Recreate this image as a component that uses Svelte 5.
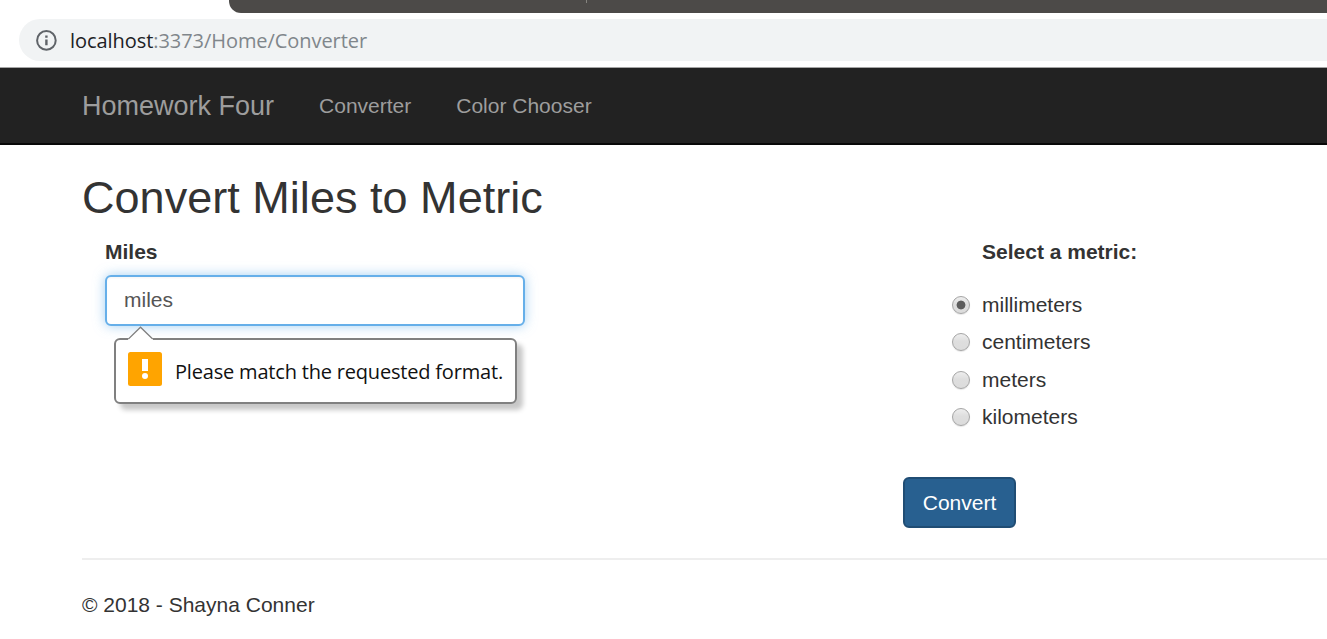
<script>
  const metrics = ['millimeters', 'centimeters', 'meters', 'kilometers'];
  let selected = $state('millimeters');
  let miles = $state('miles');
</script>

<div class="window">
  <div class="tabs"><span class="separator"></span></div>

  <div class="address">
    <svg class="info" viewBox="0 0 22 22" width="22" height="22">
      <circle cx="11.4" cy="11.4" r="9.3" fill="none" stroke="#5f6368" stroke-width="2" />
      <path d="M10.2 10.4h2.4v5.8h-2.4zM10.2 6.4h2.4v2.4h-2.4z" fill="#5f6368" />
    </svg>
    <span class="url"><span class="host">localhost</span><span class="path">:3373/Home/Converter</span></span>
  </div>

  <nav>
    <span class="brand">Homework Four</span>
    <span class="link">Converter</span>
    <span class="link">Color Chooser</span>
  </nav>

  <main>
    <h2>Convert Miles to Metric</h2>
    <div class="form">
      <div class="field">
        <label for="miles">Miles</label>
        <input id="miles" class="text" type="text" bind:value={miles} />
        <div class="popover">
          <svg class="arrow" viewBox="0 0 26 15" width="26" height="15">
            <path d="M0 13 L12.5 1 L25 13 V15 H0z" fill="#fff" />
            <path d="M0.3 13 L12.5 1.2 L24.7 13" fill="none" stroke="#808080" stroke-width="1.3" />
          </svg>
          <svg class="warn" viewBox="0 0 34 34" width="34" height="34">
            <rect width="34" height="34" rx="2.5" fill="#ffa400" />
            <rect x="14" y="7" width="6" height="12" fill="#fff" />
            <circle cx="17" cy="24" r="3" fill="#fff" />
          </svg>
          <span class="message">Please match the requested format.</span>
        </div>
      </div>

      <div class="choice">
        <div class="title">Select a metric:</div>
        <div class="radios">
          {#each metrics as metric}
            <label class="option">
              <input type="radio" name="metric" value={metric} bind:group={selected} />
              <span>{metric}</span>
            </label>
          {/each}
        </div>
        <button>Convert</button>
      </div>
    </div>
    <hr />
    <footer>© 2018 - Shayna Conner</footer>
  </main>
</div>

<style>
  :global(body) {
    margin: 0;
    background: #fff;
    overflow: hidden;
  }
  .window {
    width: 1327px;
    height: 639px;
    overflow: hidden;
    box-sizing: border-box;
    font: 21px/30px 'Liberation Sans', Arial, sans-serif;
    color: #333;
  }
  .tabs {
    height: 13px;
    margin-left: 229px;
    background: #4c4a48;
    border-bottom-left-radius: 12px;
  }
  .separator {
    display: block;
    width: 1px;
    height: 3px;
    margin-left: 357px;
    background: #85847f;
  }
  .address {
    display: flex;
    align-items: center;
    height: 42px;
    margin: 6px 0 6px 19px;
    padding-left: 16px;
    background: #f1f3f4;
    border-radius: 21px 0 0 21px;
  }
  .info {
    margin-right: 13px;
  }
  .url {
    padding-top: 2px;
    font-family: 'Open Sans', 'Noto Sans', sans-serif;
    font-size: 20px;
    letter-spacing: -0.06px;
    white-space: nowrap;
  }
  .host {
    color: #202124;
  }
  .path {
    color: #80868b;
  }
  nav {
    display: flex;
    align-items: center;
    height: 75px;
    padding-left: 82px;
    background: #222;
    border-top: 1px solid #a5a5a5;
    border-bottom: 2px solid #080808;
    color: #9d9d9d;
  }
  .brand {
    font-size: 27px;
    margin-right: 22.5px;
  }
  .link {
    padding: 0 22.5px;
  }
  main {
    padding-left: 82px;
  }
  h2 {
    margin: 28px 0 14px;
    font-size: 45px;
    font-weight: 400;
    line-height: 50px;
    letter-spacing: 0.03px;
  }
  .form {
    display: flex;
    height: 321px;
  }
  .field {
    position: relative;
    width: 420px;
    margin-left: 23px;
  }
  .field label,
  .title {
    display: block;
    font-weight: 700;
  }
  .text {
    display: block;
    box-sizing: border-box;
    width: 420px;
    height: 51px;
    margin-top: 8px;
    padding: 0 17px 2px;
    border: 2px solid #66afe9;
    border-radius: 6px;
    outline: none;
    box-shadow:
      inset 0 1.5px 1.5px rgba(0, 0, 0, 0.03),
      0 0 12px rgba(102, 175, 233, 0.6);
    font: inherit;
    color: #555;
  }
  .popover {
    position: absolute;
    top: 101px;
    left: 9px;
    display: flex;
    align-items: center;
    box-sizing: border-box;
    width: 403px;
    height: 66px;
    padding-left: 12px;
    background: #fff;
    border: 2px solid #808080;
    border-radius: 6px;
    box-shadow: 6px 6px 5px rgba(0, 0, 0, 0.22);
  }
  .arrow {
    position: absolute;
    left: 12px;
    top: -14px;
  }
  .warn {
    margin: -4px 13px 0 0;
  }
  .message {
    padding-top: 2px;
    font-family: 'Open Sans', 'Noto Sans', sans-serif;
    font-size: 20px;
    letter-spacing: -0.19px;
    color: #111;
    white-space: nowrap;
  }
  .choice {
    margin-left: 378px;
  }
  .title {
    margin-left: 79px;
  }
  .radios {
    display: grid;
    row-gap: 7.5px;
    margin: 22.6px 0 44.9px 49px;
  }
  .option {
    display: flex;
    align-items: center;
  }
  .option:nth-child(even) {
    margin: -0.3px 0 0.3px;
  }
  .option input {
    appearance: none;
    box-sizing: border-box;
    width: 18px;
    height: 18px;
    margin: 0 12px 0 0;
    border: 1px solid #a5a5a5;
    border-radius: 50%;
    background: linear-gradient(#eee 0%, #dedede 45%, #dcdcdc 100%);
    box-shadow: 0 1px 1px rgba(0, 0, 0, 0.1);
  }
  .option input:checked {
    background:
      radial-gradient(circle, #5d5d5d 4px, transparent 4.8px),
      linear-gradient(#eee 0%, #dedede 45%, #dcdcdc 100%);
  }
  button {
    display: block;
    box-sizing: border-box;
    width: 113px;
    height: 51px;
    padding: 1px 0 0;
    border: 2px solid #204d74;
    border-radius: 6px;
    background: #286090;
    color: #fff;
    font: inherit;
  }
  hr {
    height: 2px;
    margin: 0 0 30px;
    border: 0;
    background: #eee;
  }
</style>
